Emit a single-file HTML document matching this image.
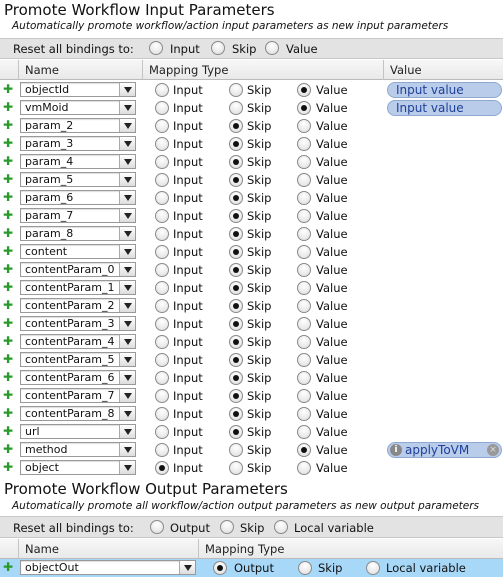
<!DOCTYPE html><html><head><meta charset="utf-8"><style>
*{box-sizing:border-box;margin:0;padding:0}
body{width:503px;height:577px;background:#fff;font-family:"DejaVu Sans","Liberation Sans",sans-serif;font-size:11.5px;color:#111;position:relative;overflow:hidden}
.a{position:absolute;white-space:nowrap}
.t{font-size:15px;left:4px}
.s{font-style:italic;font-size:10.5px;left:12px}
.bar{position:absolute;left:0;width:503px;background:#e3e3e3;border-top:1px solid #c8c8c8;border-bottom:1px solid #c8c8c8}
.hd{position:absolute;left:0;width:503px;height:20px;background:linear-gradient(#f7f7f7,#e9e9e9);border-bottom:1px solid #bbb}
.hd span{position:absolute;top:0;height:20px;line-height:20px;border-left:1px solid #c4c4c4;padding-left:6px;color:#222}
.r{position:absolute;left:0;width:503px;height:18px}
.r .p{position:absolute;left:3px;top:1px;color:#2a9a2a;font-size:12px;font-weight:bold}
.dd{position:absolute;left:20px;top:1px;width:116px;height:15px;border:1px solid #999;background:#fff;line-height:13px;padding-left:4px;box-shadow:inset 0 1px 1px #ddd;font-size:11px;overflow:hidden;white-space:nowrap}
.dd i{position:absolute;right:0;top:0;width:16px;height:13px;border-left:1px solid #aaa;background:linear-gradient(#fff,#ddd)}
.dd i:after{content:"";position:absolute;left:4px;top:4px;border-left:4px solid transparent;border-right:4px solid transparent;border-top:6px solid #222}
.rb{position:absolute;top:2px;width:14px;height:14px;border-radius:50%;border:1px solid #8a8a8a;background:radial-gradient(circle at 50% 30%,#fff,#ddd)}
.rb.on:after{content:"";position:absolute;left:3px;top:3px;width:6px;height:6px;border-radius:50%;background:#111}
.l{position:absolute;top:2px;line-height:14px}
.pill{position:absolute;left:387px;top:1px;width:115px;height:16px;border-radius:8px;background:#b9cdea;border:1px solid #8fa8cf;color:#1f3f9a;padding-left:8px;line-height:14px;font-size:12px}
</style></head><body>
<div class="a t" style="top:1px">Promote Workflow Input Parameters</div>
<div class="a s" style="top:20px">Automatically promote workflow/action input parameters as new input parameters</div>
<div class="bar" style="top:38px;height:21px"><span class="a" style="left:13px;top:3px">Reset all bindings to:</span><span class="rb" style="left:149px;top:2px"></span><span class="a" style="left:170px;top:3px">Input</span><span class="rb" style="left:211px;top:2px"></span><span class="a" style="left:232px;top:3px">Skip</span><span class="rb" style="left:265px;top:2px"></span><span class="a" style="left:286px;top:3px">Value</span></div>
<div class="hd" style="top:60px"><span style="left:18px">Name</span><span style="left:142px">Mapping Type</span><span style="left:383px">Value</span></div>

<div class="r" style="top:81px"><span class="p">✚</span><div class="dd">objectId<i></i></div><span class="rb" style="left:155px"></span><span class="l" style="left:173px">Input</span><span class="rb" style="left:229px"></span><span class="l" style="left:247px">Skip</span><span class="rb on" style="left:297px"></span><span class="l" style="left:316px">Value</span><div class="pill">Input value</div></div>
<div class="r" style="top:99px"><span class="p">✚</span><div class="dd">vmMoid<i></i></div><span class="rb" style="left:155px"></span><span class="l" style="left:173px">Input</span><span class="rb" style="left:229px"></span><span class="l" style="left:247px">Skip</span><span class="rb on" style="left:297px"></span><span class="l" style="left:316px">Value</span><div class="pill">Input value</div></div>
<div class="r" style="top:117px"><span class="p">✚</span><div class="dd">param_2<i></i></div><span class="rb" style="left:155px"></span><span class="l" style="left:173px">Input</span><span class="rb on" style="left:229px"></span><span class="l" style="left:247px">Skip</span><span class="rb" style="left:297px"></span><span class="l" style="left:316px">Value</span></div>
<div class="r" style="top:135px"><span class="p">✚</span><div class="dd">param_3<i></i></div><span class="rb" style="left:155px"></span><span class="l" style="left:173px">Input</span><span class="rb on" style="left:229px"></span><span class="l" style="left:247px">Skip</span><span class="rb" style="left:297px"></span><span class="l" style="left:316px">Value</span></div>
<div class="r" style="top:153px"><span class="p">✚</span><div class="dd">param_4<i></i></div><span class="rb" style="left:155px"></span><span class="l" style="left:173px">Input</span><span class="rb on" style="left:229px"></span><span class="l" style="left:247px">Skip</span><span class="rb" style="left:297px"></span><span class="l" style="left:316px">Value</span></div>
<div class="r" style="top:171px"><span class="p">✚</span><div class="dd">param_5<i></i></div><span class="rb" style="left:155px"></span><span class="l" style="left:173px">Input</span><span class="rb on" style="left:229px"></span><span class="l" style="left:247px">Skip</span><span class="rb" style="left:297px"></span><span class="l" style="left:316px">Value</span></div>
<div class="r" style="top:189px"><span class="p">✚</span><div class="dd">param_6<i></i></div><span class="rb" style="left:155px"></span><span class="l" style="left:173px">Input</span><span class="rb on" style="left:229px"></span><span class="l" style="left:247px">Skip</span><span class="rb" style="left:297px"></span><span class="l" style="left:316px">Value</span></div>
<div class="r" style="top:207px"><span class="p">✚</span><div class="dd">param_7<i></i></div><span class="rb" style="left:155px"></span><span class="l" style="left:173px">Input</span><span class="rb on" style="left:229px"></span><span class="l" style="left:247px">Skip</span><span class="rb" style="left:297px"></span><span class="l" style="left:316px">Value</span></div>
<div class="r" style="top:225px"><span class="p">✚</span><div class="dd">param_8<i></i></div><span class="rb" style="left:155px"></span><span class="l" style="left:173px">Input</span><span class="rb on" style="left:229px"></span><span class="l" style="left:247px">Skip</span><span class="rb" style="left:297px"></span><span class="l" style="left:316px">Value</span></div>
<div class="r" style="top:243px"><span class="p">✚</span><div class="dd">content<i></i></div><span class="rb" style="left:155px"></span><span class="l" style="left:173px">Input</span><span class="rb on" style="left:229px"></span><span class="l" style="left:247px">Skip</span><span class="rb" style="left:297px"></span><span class="l" style="left:316px">Value</span></div>
<div class="r" style="top:261px"><span class="p">✚</span><div class="dd">contentParam_0<i></i></div><span class="rb" style="left:155px"></span><span class="l" style="left:173px">Input</span><span class="rb on" style="left:229px"></span><span class="l" style="left:247px">Skip</span><span class="rb" style="left:297px"></span><span class="l" style="left:316px">Value</span></div>
<div class="r" style="top:279px"><span class="p">✚</span><div class="dd">contentParam_1<i></i></div><span class="rb" style="left:155px"></span><span class="l" style="left:173px">Input</span><span class="rb on" style="left:229px"></span><span class="l" style="left:247px">Skip</span><span class="rb" style="left:297px"></span><span class="l" style="left:316px">Value</span></div>
<div class="r" style="top:297px"><span class="p">✚</span><div class="dd">contentParam_2<i></i></div><span class="rb" style="left:155px"></span><span class="l" style="left:173px">Input</span><span class="rb on" style="left:229px"></span><span class="l" style="left:247px">Skip</span><span class="rb" style="left:297px"></span><span class="l" style="left:316px">Value</span></div>
<div class="r" style="top:315px"><span class="p">✚</span><div class="dd">contentParam_3<i></i></div><span class="rb" style="left:155px"></span><span class="l" style="left:173px">Input</span><span class="rb on" style="left:229px"></span><span class="l" style="left:247px">Skip</span><span class="rb" style="left:297px"></span><span class="l" style="left:316px">Value</span></div>
<div class="r" style="top:333px"><span class="p">✚</span><div class="dd">contentParam_4<i></i></div><span class="rb" style="left:155px"></span><span class="l" style="left:173px">Input</span><span class="rb on" style="left:229px"></span><span class="l" style="left:247px">Skip</span><span class="rb" style="left:297px"></span><span class="l" style="left:316px">Value</span></div>
<div class="r" style="top:351px"><span class="p">✚</span><div class="dd">contentParam_5<i></i></div><span class="rb" style="left:155px"></span><span class="l" style="left:173px">Input</span><span class="rb on" style="left:229px"></span><span class="l" style="left:247px">Skip</span><span class="rb" style="left:297px"></span><span class="l" style="left:316px">Value</span></div>
<div class="r" style="top:369px"><span class="p">✚</span><div class="dd">contentParam_6<i></i></div><span class="rb" style="left:155px"></span><span class="l" style="left:173px">Input</span><span class="rb on" style="left:229px"></span><span class="l" style="left:247px">Skip</span><span class="rb" style="left:297px"></span><span class="l" style="left:316px">Value</span></div>
<div class="r" style="top:387px"><span class="p">✚</span><div class="dd">contentParam_7<i></i></div><span class="rb" style="left:155px"></span><span class="l" style="left:173px">Input</span><span class="rb on" style="left:229px"></span><span class="l" style="left:247px">Skip</span><span class="rb" style="left:297px"></span><span class="l" style="left:316px">Value</span></div>
<div class="r" style="top:405px"><span class="p">✚</span><div class="dd">contentParam_8<i></i></div><span class="rb" style="left:155px"></span><span class="l" style="left:173px">Input</span><span class="rb on" style="left:229px"></span><span class="l" style="left:247px">Skip</span><span class="rb" style="left:297px"></span><span class="l" style="left:316px">Value</span></div>
<div class="r" style="top:423px"><span class="p">✚</span><div class="dd">url<i></i></div><span class="rb" style="left:155px"></span><span class="l" style="left:173px">Input</span><span class="rb on" style="left:229px"></span><span class="l" style="left:247px">Skip</span><span class="rb" style="left:297px"></span><span class="l" style="left:316px">Value</span></div>
<div class="r" style="top:441px"><span class="p">✚</span><div class="dd">method<i></i></div><span class="rb" style="left:155px"></span><span class="l" style="left:173px">Input</span><span class="rb" style="left:229px"></span><span class="l" style="left:247px">Skip</span><span class="rb on" style="left:297px"></span><span class="l" style="left:316px">Value</span><div class="pill" style="padding-left:17px"><span style="position:absolute;left:2px;top:1px;width:12px;height:12px;border-radius:50%;background:#888;color:#fff;font-size:9px;font-weight:bold;line-height:12px;text-align:center">i</span>applyToVM<span style="position:absolute;right:2px;top:1px;width:12px;height:12px;border-radius:50%;background:#999;color:#ddd;font-size:9px;line-height:12px;text-align:center">×</span></div></div>
<div class="r" style="top:459px"><span class="p">✚</span><div class="dd">object<i></i></div><span class="rb on" style="left:155px"></span><span class="l" style="left:173px">Input</span><span class="rb" style="left:229px"></span><span class="l" style="left:247px">Skip</span><span class="rb" style="left:297px"></span><span class="l" style="left:316px">Value</span></div>

<div class="a t" style="top:480px">Promote Workflow Output Parameters</div>
<div class="a s" style="top:500px">Automatically promote all workflow/action output parameters as new output parameters</div>
<div class="bar" style="top:516px;height:22px"><span class="a" style="left:13px;top:4px">Reset all bindings to:</span><span class="rb" style="left:150px;top:3px"></span><span class="a" style="left:170px;top:4px">Output</span><span class="rb" style="left:220px;top:3px"></span><span class="a" style="left:240px;top:4px">Skip</span><span class="rb" style="left:274px;top:3px"></span><span class="a" style="left:294px;top:4px">Local variable</span></div>
<div class="hd" style="top:539px"><span style="left:18px">Name</span><span style="left:198px">Mapping Type</span></div>
<div class="r" style="top:559px;background:#a8d8f8"><span class="p">✚</span><div class="dd" style="width:176px">objectOut<i></i></div><span class="rb on" style="left:213px"></span><span class="l" style="left:234px">Output</span><span class="rb" style="left:298px"></span><span class="l" style="left:318px">Skip</span><span class="rb" style="left:366px"></span><span class="l" style="left:386px">Local variable</span></div>
</body></html>
